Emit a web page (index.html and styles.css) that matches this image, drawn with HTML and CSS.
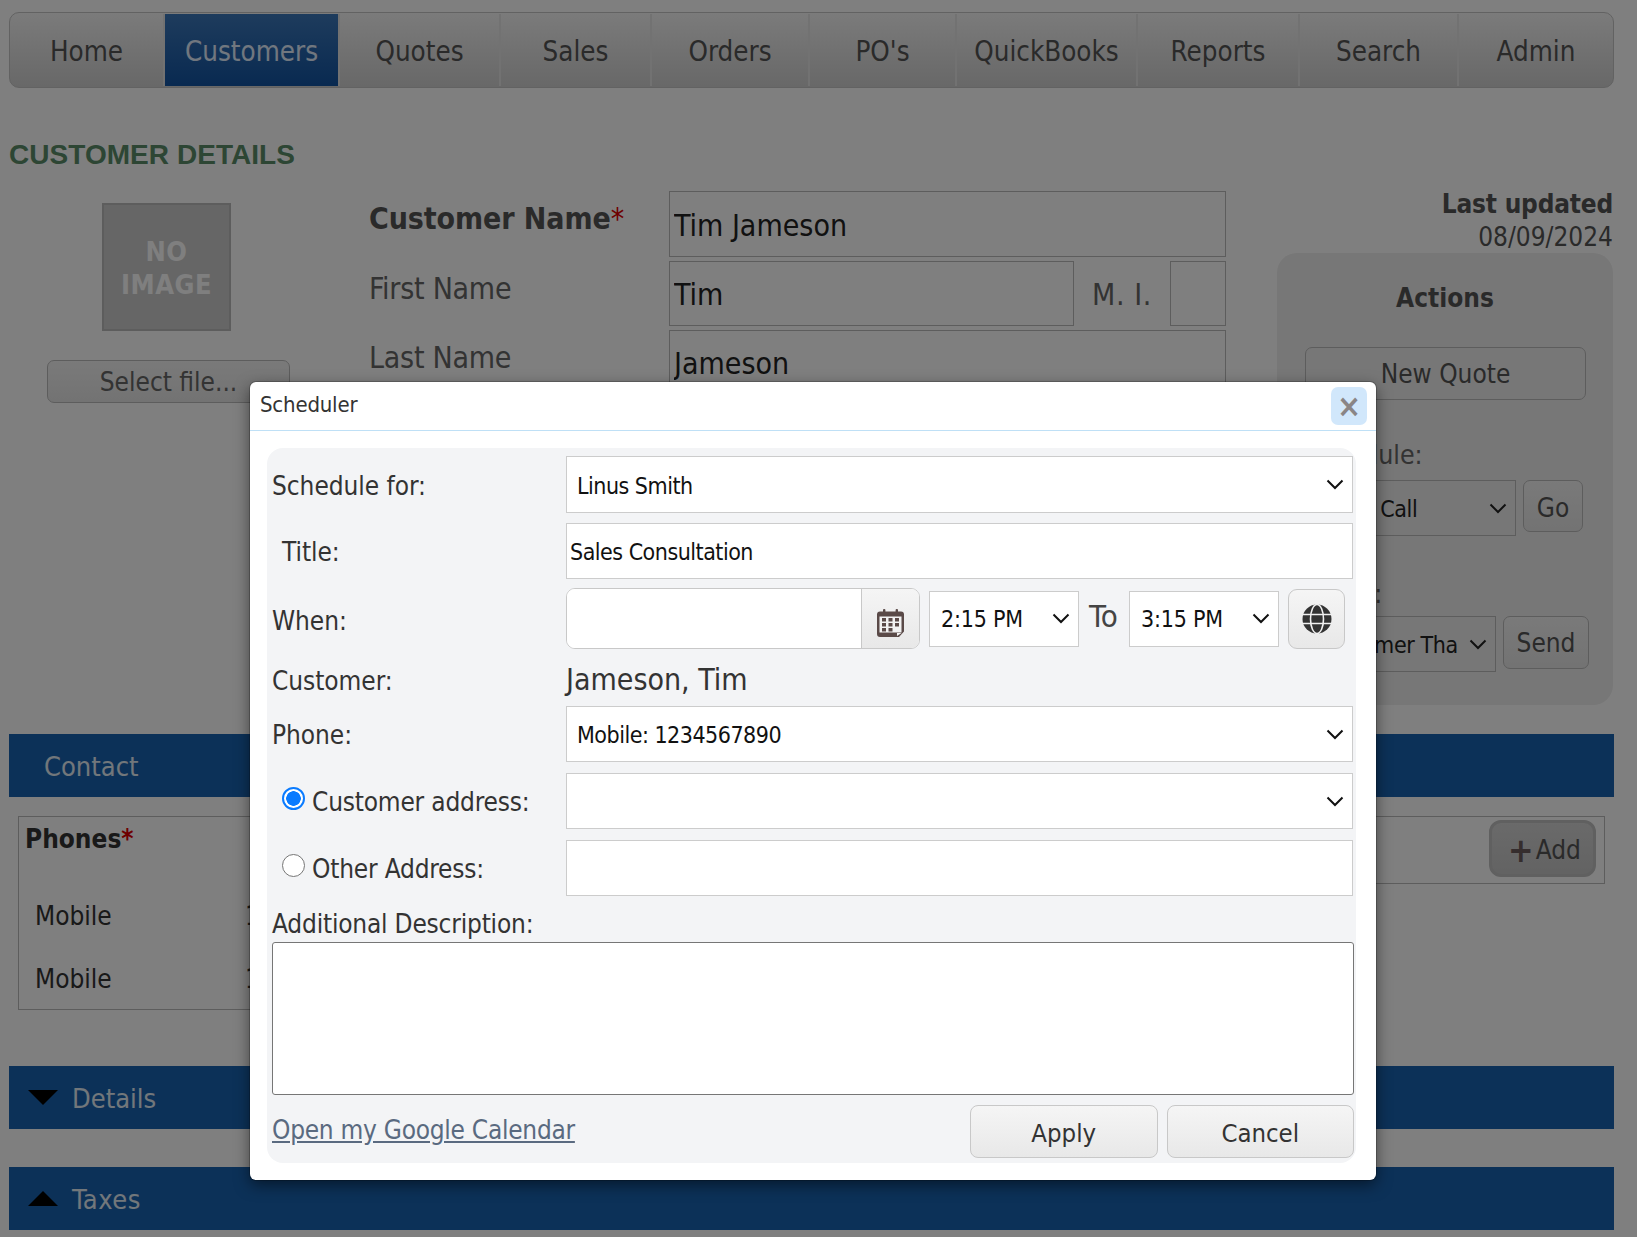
FILE: index.html
```html
<!DOCTYPE html>
<html lang="en">
<head>
<meta charset="utf-8">
<title>Customer Details</title>
<link rel="stylesheet" href="styles.css">
</head>
<body>
<nav class="nav">
  <a class="tab w-home">Home</a>
  <a class="tab w-customers active">Customers</a>
  <a class="tab w-quotes">Quotes</a>
  <a class="tab w-sales">Sales</a>
  <a class="tab w-orders">Orders</a>
  <a class="tab w-pos">PO's</a>
  <a class="tab w-qb">QuickBooks</a>
  <a class="tab w-reports">Reports</a>
  <a class="tab w-search">Search</a>
  <a class="tab w-admin">Admin</a>
</nav>

<h1 class="page-title">CUSTOMER DETAILS</h1>

<section class="top">
  <div class="photo-col">
    <div class="no-image">NO<br>IMAGE</div>
    <button class="btn select-file">Select file...</button>
  </div>
  <div class="form-col">
    <div class="form-row">
      <label class="form-label strong">Customer Name<span class="req thin">*</span></label>
      <input class="text-field" value="Tim Jameson">
    </div>
    <div class="form-row">
      <label class="form-label">First Name</label>
      <div class="name-line">
        <input class="text-field first" value="Tim">
        <span class="mi-label">M. I.</span>
        <input class="text-field mi" value="">
      </div>
    </div>
    <div class="form-row">
      <label class="form-label">Last Name</label>
      <input class="text-field" value="Jameson">
    </div>
  </div>
  <aside class="side-col">
    <div class="updated"><b>Last updated</b><br>08/09/2024</div>
    <div class="actions">
      <h2 class="actions-title">Actions</h2>
      <button class="btn new-quote">New Quote</button>
      <div class="actions-label first-label">Schedule:</div>
      <div class="action-line one">
        <select class="pick pick-call"><option>Phone Call</option></select>
        <button class="btn go">Go</button>
      </div>
      <div class="actions-label second-label">Email:</div>
      <div class="action-line two">
        <select class="pick pick-mail"><option>Customer Thank You</option></select>
        <button class="btn send">Send</button>
      </div>
    </div>
  </aside>
</section>

<div class="bar contact-bar"><span class="bar-text plain">Contact</span></div>

<section class="phones">
  <div class="phones-left">
    <div class="phones-title">Phones<span class="req">*</span></div>
    <div class="phone-line"><span class="phone-type">Mobile</span><span class="phone-num">1</span></div>
    <div class="phone-line"><span class="phone-type">Mobile</span><span class="phone-num">1</span></div>
  </div>
  <div class="phones-right">
    <button class="add"><span class="plus">+</span>Add</button>
  </div>
</section>

<div class="bar details-bar"><span class="tri down"></span><span class="bar-text">Details</span></div>
<div class="bar taxes-bar"><span class="tri up"></span><span class="bar-text taxes-text">Taxes</span></div>

<div class="overlay"></div>

<div class="modal">
  <header class="modal-head">
    <span class="modal-title">Scheduler</span>
    <button class="close">×</button>
  </header>
  <div class="modal-body">
    <form class="panel">
      <div class="row r1">
        <label class="lbl">Schedule for:</label>
        <select class="ctl"><option>Linus Smith</option></select>
      </div>
      <div class="row r2">
        <label class="lbl indent">Title:</label>
        <input class="ctl title-input" value="Sales Consultation">
      </div>
      <div class="row r3">
        <label class="lbl when">When:</label>
        <div class="when-line">
          <div class="date-group">
            <input class="date-input">
            <span class="date-addon">
              <svg width="27" height="28" viewBox="0 0 27 28" aria-hidden="true">
                <rect x="6" y="0" width="2.4" height="5" rx="1" fill="#5a4a48"/>
                <rect x="18.6" y="0" width="2.4" height="5" rx="1" fill="#5a4a48"/>
                <path d="M3 2.500h21a3 3 0 0 1 3 3v17l-5 5.500H3a3 3 0 0 1-3-3v-19.500a3 3 0 0 1 3-3z" fill="#5a4a48"/>
                <rect x="2.500" y="7.500" width="22" height="16" fill="#f2f2f2"/>
                <path d="M20 24h4.500l-4.500 3z" fill="#f2f2f2"/>
                <g fill="#5a4a48">
                  <rect x="5" y="9" width="4" height="3.500"/><rect x="11.500" y="9" width="4" height="3.500"/><rect x="18" y="9" width="4" height="3.500"/>
                  <rect x="5" y="14" width="4" height="3.500"/><rect x="11.500" y="14" width="4" height="3.500"/><rect x="18" y="14" width="4" height="3.500"/>
                  <rect x="5" y="19" width="4" height="3.500"/><rect x="11.500" y="19" width="4" height="3.500"/>
                </g>
              </svg>
            </span>
          </div>
          <select class="ctl time"><option>2:15 PM</option></select>
          <span class="to">To</span>
          <select class="ctl time"><option>3:15 PM</option></select>
          <button type="button" class="globe">
            <svg width="30" height="30" viewBox="0 0 30 30" aria-hidden="true">
              <circle cx="15" cy="15" r="14.500" fill="#333"/>
              <ellipse cx="15" cy="15" rx="6.500" ry="14.500" fill="none" stroke="#f0f0f0" stroke-width="1.600"/>
              <path d="M0 10.500h30M0 19.500h30" stroke="#f0f0f0" stroke-width="1.600"/>
            </svg>
          </button>
        </div>
      </div>
      <div class="row r4">
        <label class="lbl cust-lbl">Customer:</label>
        <span class="customer-name">Jameson, Tim</span>
      </div>
      <div class="row r5">
        <label class="lbl">Phone:</label>
        <select class="ctl"><option>Mobile: 1234567890</option></select>
      </div>
      <div class="row r6">
        <label class="lbl radio-lbl"><input type="radio" name="addr" checked class="radio"><span>Customer address:</span></label>
        <select class="ctl"><option></option></select>
      </div>
      <div class="row r7">
        <label class="lbl radio-lbl"><input type="radio" name="addr" class="radio radio-other"><span>Other Address:</span></label>
        <input class="ctl">
      </div>
      <label class="lbl desc-lbl">Additional Description:</label>
      <textarea class="desc"></textarea>
      <div class="foot">
        <a class="gcal">Open my Google Calendar</a>
        <div class="foot-btns">
          <button type="button" class="mbtn">Apply</button>
          <button type="button" class="mbtn">Cancel</button>
        </div>
      </div>
    </form>
  </div>
</div>
</body>
</html>
```
FILE: styles.css
```css
* { box-sizing: border-box; }
html, body { margin: 0; height: 100%; }
body {
  background: #fff;
  padding: 12px 23px 0 9px;
  font-family: "DejaVu Sans", "Noto Sans", sans-serif;
  font-stretch: condensed;
  color: #555;
  overflow: hidden;
  height: 1237px;
  position: relative;
}
button, input, select, textarea { font-family: inherit; font-stretch: condensed; }

/* nav */
.nav {
  display: flex;
  height: 76px;
  border: 1px solid #c4c4c4;
  border-radius: 10px;
  background: linear-gradient(#f6f6f6, #d0d0d0);
  padding: 1px 0;
}
.tab {
  display: flex;
  align-items: center;
  justify-content: center;
  border-right: 2px solid #e4e4e4;
  font-size: 27.500px;
  color: #555;
  padding-top: 2px;
}
.w-home { width: 155px; }
.w-customers { width: 175px; }
.w-quotes { width: 161px; }
.w-sales { width: 151px; }
.w-orders { width: 158px; }
.w-pos { width: 147px; }
.w-qb { width: 181px; }
.w-reports { width: 162px; }
.w-search { width: 159px; }
.w-admin { flex: 1; border-right: 0; }
.tab.active { background: linear-gradient(#3c78ba, #1254a2); color: #e2efff; }

.page-title {
  margin: 52px 0 0;
  height: 29px;
  font: bold 28px/29px "Liberation Sans", Arial, sans-serif;
  font-stretch: normal;
  letter-spacing: .05px;
  color: #5a8c68;
}

/* top */
.top { display: flex; margin-top: 22px; height: 543px; }
.photo-col { width: 361px; flex: none; display: flex; flex-direction: column; }
.no-image {
  margin: 12px 0 0 93px;
  width: 129px;
  height: 128px;
  background: #ccc;
  border: 2px solid #bbb;
  color: #fff;
  font-size: 27px;
  font-weight: bold;
  line-height: 33px;
  text-align: center;
  padding-top: 30px;
  letter-spacing: .5px;
}
.btn {
  background: linear-gradient(#f4f4f4, #e6e6e6);
  border: 1px solid #bbb;
  border-radius: 7px;
  font-size: 26px;
  color: #555;
  padding: 0;
}
.select-file { margin: 29px 0 0 38px; width: 243px; height: 43px; color: #666; }

.form-col { width: 856px; flex: none; display: flex; flex-direction: column; gap: 4px; }
.form-row { display: grid; grid-template-columns: 299px 1fr; height: 66px; }
.form-row + .form-row { height: 65px; }
.form-label { font-size: 30px; color: #666; padding-top: 9px; line-height: 38px; margin-left: -1px; letter-spacing: -.25px; }
.strong { font-weight: bold; color: #555; letter-spacing: -.1px; }
.req { color: #d00; }
.thin { font-weight: normal; }
.text-field {
  border: 1px solid #bbb;
  background: transparent;
  font-size: 30px;
  color: #222;
  padding: 2px 4px 0;
  width: 100%;
  height: 100%;
  outline: 0;
  border-radius: 0;
}
.name-line { display: flex; align-items: stretch; }
.text-field.first { width: 405px; flex: none; }
.mi-label { width: 96px; flex: none; font-size: 30px; color: #666; padding: 16px 0 0 18px; letter-spacing: .6px; }
.text-field.mi { width: 56px; flex: none; }

.side-col { margin-left: 51px; width: 336px; flex: none; display: flex; flex-direction: column; position: relative; }
.updated { text-align: right; font-size: 26px; line-height: 33px; color: #555; margin-top: -3px; height: 65px; }
.updated b { color: #555; letter-spacing: -.2px; }
.actions {
  background: #eee;
  border-radius: 20px;
  height: 452px;
  padding: 29px 28px 0;
  position: relative;
}
.actions-title { margin: 0; text-align: center; font-size: 26px; line-height: 32px; color: #555; font-weight: bold; }
.new-quote { display: block; width: 281px; height: 53px; margin-top: 33px; color: #555; background: transparent; }
.actions-label { font-size: 26.500px; color: #666; line-height: 32px; }
.first-label { margin-top: 39px; }
.second-label { margin-top: 42px; padding-left: 3px; }
.action-line { display: flex; align-items: flex-start; }
.action-line.one { margin-top: 9px; gap: 7px; }
.action-line.two { margin-top: 6px; gap: 7px; }
.pick {
  appearance: none;
  border: 1px solid #bbb;
  border-radius: 0;
  font-size: 23px;
  letter-spacing: -.4px;
  color: #222;
  height: 56px;
  flex: none;
  background: #eee url("data:image/svg+xml,%3Csvg xmlns='http://www.w3.org/2000/svg' width='18' height='11' viewBox='0 0 18 11'%3E%3Cpath d='M1.500 1.500L9 9l7.500-7.500' fill='none' stroke='%23222' stroke-width='2'/%3E%3C/svg%3E") no-repeat right 8px center;
}
.pick-call { width: 211px; padding: 2px 36px 0 6px; }
.pick-mail { width: 192px; padding: 2px 36px 0 12px; margin-left: -1px; }
.go { width: 60px; height: 52px; flex: none; padding-top: 3px; }
.send { width: 86px; height: 53px; flex: none; }

/* bars */
.bar {
  height: 63px;
  background: #1862b0;
  display: flex;
  align-items: center;
  width: 1605px;
}
.bar-text { font-size: 27px; color: #e4eef6; padding-top: 2px; }
.bar-text.plain { margin-left: 35px; }
.taxes-text { letter-spacing: .5px; }
.tri { width: 0; height: 0; margin: 0 14px 0 19px; border-left: 15px solid transparent; border-right: 15px solid transparent; }
.tri.down { border-top: 15px solid #000; }
.tri.up { border-bottom: 15px solid #000; }

.phones { display: flex; align-items: flex-start; margin: 19px 0 0 9px; height: 193px; width: 1587px; }
.phones-left { width: 560px; height: 194px; border: 1px solid #bbb; padding: 3px 6px 0; flex: none; }
.phones-title { font-size: 26px; font-weight: bold; color: #333; line-height: 38px; margin-bottom: 41px; }
.phone-line { display: flex; font-size: 26px; color: #333; height: 63px; padding-left: 10px; line-height: 34px; }
.phone-type { width: 210px; }
.phone-num { color: #333; }
.phones-right { flex: 1; height: 68px; border: 1px solid #bbb; border-left: 0; display: flex; justify-content: flex-end; padding: 3px 8px 0 0; }
.add {
  width: 107px;
  height: 57px;
  background: linear-gradient(#d4d4d4, #c6c6c6);
  border: 3px solid #c0c0c0;
  border-radius: 12px;
  font-size: 26px;
  color: #555;
  padding: 2px 0 0 4px;
}
.plus { font-size: 34px; line-height: 20px; vertical-align: -3px; font-weight: bold; color: #6a5a5a; margin-right: 2px; }
.details-bar { margin-top: 57px; }
.taxes-bar { margin-top: 38px; }

/* overlay */
.overlay { position: absolute; inset: 0; background: rgba(0, 0, 0, .5); }

/* modal */
.modal {
  position: absolute;
  left: 250px;
  top: 382px;
  width: 1126px;
  height: 798px;
  background: #fff;
  border-radius: 6px;
  box-shadow: 0 0 0 1px rgba(0, 0, 0, .2), 0 5px 15px rgba(0, 0, 0, .5);
  display: flex;
  flex-direction: column;
}
.modal-head {
  height: 49px;
  flex: none;
  border-bottom: 1px solid #bfe0f6;
  display: flex;
  align-items: flex-start;
  justify-content: space-between;
  padding: 5px 9px 0 10px;
}
.modal-title { font-size: 22px; letter-spacing: -.2px; color: #333; padding-top: 5px; }
.close {
  width: 36px;
  height: 38px;
  border: 0;
  border-radius: 7px;
  background: #d1e7fb;
  color: #8a8585;
  font-size: 32px;
  line-height: 34px;
  font-weight: bold;
  padding: 0;
}
.modal-body { flex: 1; padding: 17px 20px 17px 17px; }
.panel {
  height: 715px;
  background: #f3f4f6;
  border-radius: 16px;
  padding: 8px 3px 0 5px;
  display: flex;
  flex-direction: column;
}
.row { display: grid; grid-template-columns: 294px 1fr; align-items: center; flex: none; }
.r1 { height: 57px; margin-bottom: 10px; }
.r2 { height: 56px; margin-bottom: 9px; }
.r3 { height: 61px; }
.r4 { height: 57px; }
.r5 { height: 56px; margin-bottom: 11px; }
.r6 { height: 56px; margin-bottom: 11px; }
.r7 { height: 56px; }
.lbl { font-size: 26px; letter-spacing: -.05px; color: #333; line-height: 32px; padding-top: 2px; }
.indent { padding-left: 10px; }
.when { padding-top: 4px; }
.cust-lbl { padding-top: 6px; }
.ctl {
  appearance: none;
  width: 100%;
  height: 100%;
  border: 1px solid #ccc;
  border-radius: 0;
  background: #fff;
  font-size: 23px;
  letter-spacing: -.5px;
  color: #111;
  padding: 2px 40px 0 10px;
  outline: 0;
}
select.ctl {
  background: #fff url("data:image/svg+xml,%3Csvg xmlns='http://www.w3.org/2000/svg' width='18' height='11' viewBox='0 0 18 11'%3E%3Cpath d='M1.500 1.500L9 9l7.500-7.500' fill='none' stroke='%23111' stroke-width='2'/%3E%3C/svg%3E") no-repeat right 8px center;
}
input.ctl { padding: 2px 4px 0 3px; }
.when-line { display: flex; align-items: center; height: 100%; }
.date-group {
  display: flex;
  width: 354px;
  height: 61px;
  border: 1px solid #c8c8c8;
  border-radius: 9px;
  background: #fff;
  overflow: hidden;
  flex: none;
}
.date-input { flex: 1; min-width: 0; border: 0; outline: 0; background: #fff; }
.date-addon {
  width: 58px;
  flex: none;
  border-left: 1px solid #c8c8c8;
  background: linear-gradient(#f5f5f5, #e8e8e8);
  display: flex;
  align-items: flex-end;
  justify-content: center;
  padding-bottom: 11px;
}
.ctl.time { width: 150px; height: 56px; flex: none; margin-left: 9px; padding-left: 11px; letter-spacing: -.2px; padding-top: 0; }
.to { width: 40px; margin-left: 10px; font-size: 31px; color: #444; flex: none; margin-right: -9px; line-height: 40px; padding-bottom: 6px; }
.globe {
  width: 57px;
  height: 60px;
  margin-left: 9px;
  flex: none;
  border: 1px solid #c8c8c8;
  border-radius: 9px;
  background: linear-gradient(#f5f5f5, #e8e8e8);
  padding: 0;
  display: flex;
  align-items: center;
  justify-content: center;
}
.customer-name { font-size: 30px; color: #333; padding-top: 4px; }
.radio-lbl { display: flex; align-items: center; padding-left: 10px; letter-spacing: -.2px; }
.radio { appearance: none; width: 23px; height: 23px; margin: 0 7px 7px 0; border-radius: 50%; border: 1.500px solid #767676; background: #fff; flex: none; }
.radio-other { margin-bottom: 8px; }
.radio:checked { border: 2px solid #0a7bff; background: radial-gradient(circle, #0a7bff 0 7px, #fff 7.500px); }
.desc-lbl { height: 46px; padding-top: 12px; flex: none; display: block; letter-spacing: -.2px; }
.desc {
  width: 1082px;
  height: 153px;
  flex: none;
  border: 1px solid #767676;
  border-radius: 3px;
  background: #fff;
  resize: none;
  outline: 0;
}
.foot { display: flex; justify-content: space-between; margin-top: 10px; width: 1082px; }
.gcal { font-size: 26px; letter-spacing: -.27px; color: #5a6a80; text-decoration: underline; line-height: 50px; }
.foot-btns { display: flex; gap: 9px; }
.mbtn {
  width: 187.500px;
  height: 53px;
  border: 1px solid #c8c8c8;
  border-radius: 8px;
  background: linear-gradient(#f5f5f5, #e8e8e8);
  font-size: 25.500px;
  color: #333;
  padding: 2px 0 0;
}
```
